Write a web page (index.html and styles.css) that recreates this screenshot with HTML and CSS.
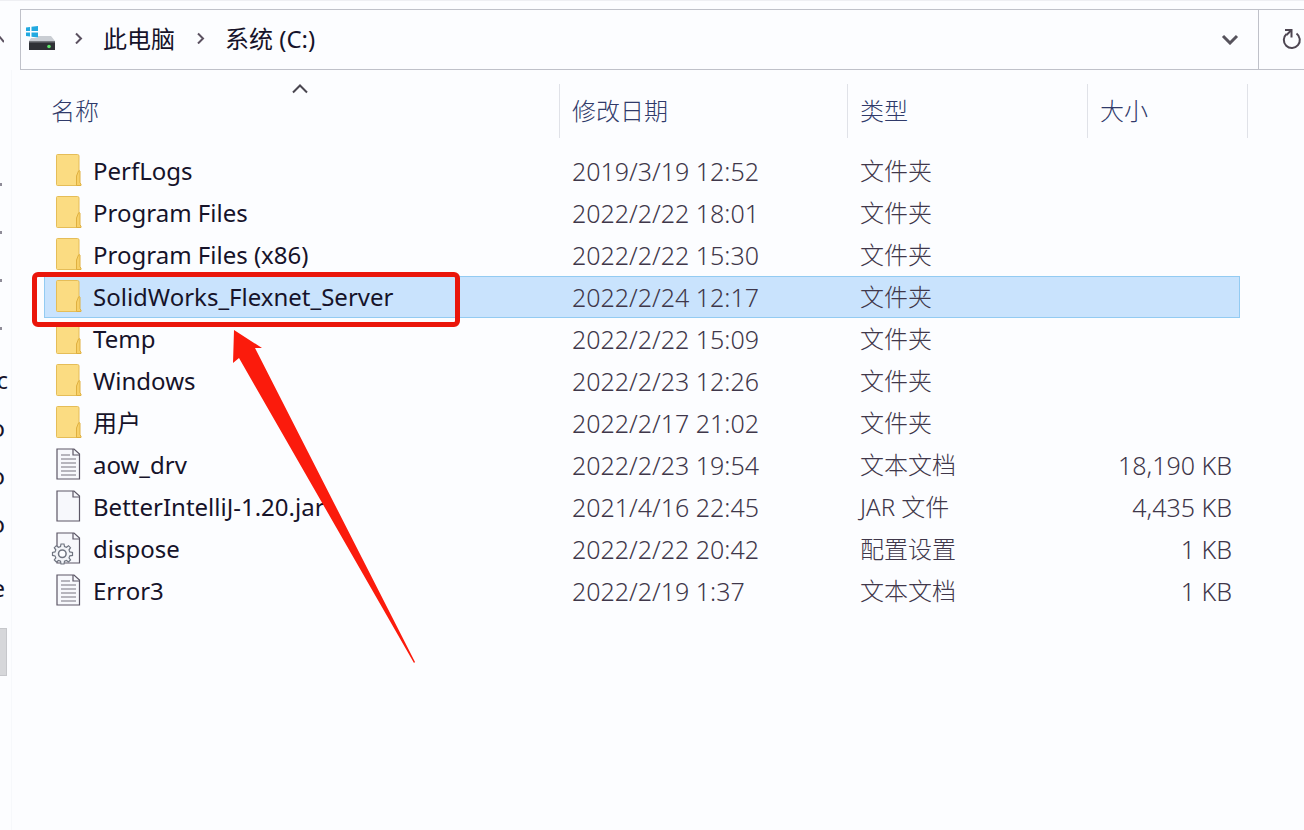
FILE: index.html
```
<!DOCTYPE html>
<html lang="zh-CN">
<head>
    <meta charset="UTF-8">
    <meta name="viewport" content="width=device-width, initial-scale=1.0">
    <title>系统 (C:)</title>
    <link rel="stylesheet" href="styles.css">
</head>
<body>
    <!-- Icons shared by the rows -->
    <svg class="sprite" aria-hidden="true">
        <symbol id="icon-folder" viewBox="0 0 28 34">
            <path d="M2.500 .5h20q1.500 0 1.500 1.500v29.500H2.500q-1 0-1-1v-29q0-1 1-1z" fill="#fbdc82" stroke="#e5bd58"/>
            <path d="M21.500 31.500V22l2-5q1-1 1.500 0v12l1 1v1.500z" fill="#f7d068" stroke="#dfb040"/>
        </symbol>
        <symbol id="icon-page" viewBox="0 0 28 34">
            <path d="M2 1h17l5.500 5v25H2z" fill="#f7f8fc" stroke="#5c5766" stroke-width="1.200"/>
            <path d="M18 1v6h6" fill="none" stroke="#5c5766" stroke-width="1.200"/>
        </symbol>
        <symbol id="icon-text" viewBox="0 0 28 34">
            <use href="#icon-page"/>
            <path d="M6 7h9M6 11h15M6 15h15M6 19h15M6 23h15M6 27h15" stroke="#77737f" stroke-width="1.200"/>
        </symbol>
        <symbol id="icon-config" viewBox="-4 0 32 34">
            <use href="#icon-page" width="28" height="34"/>
            <path d="M6 12h3l.5 2.500 2 .8 2-1.600 2 2-1.500 2.200.8 2 2.700.5v3l-2.700.5-.8 2 1.500 2.100-2 2-2-1.500-2 .8L9 32H6l-.5-2.700-2-.8-2.200 1.500-2-2 1.500-2.100-.8-2-2.500-.5v-3l2.500-.5.8-2-1.500-2.200 2-2 2.200 1.600 2-.8z" fill="#f2f4f8" stroke="#6f7480" stroke-width="1.200"/>
            <circle cx="7.300" cy="21.800" r="3.800" fill="#fcfdff" stroke="#6f7480" stroke-width="1.500"/>
        </symbol>
    </svg>

    <header class="toolbar">
        <button class="up-button" type="button" aria-label="上移">
            <svg width="10" height="10" viewBox="0 0 10 10"><path d="M0 7l5-6 5 6" /></svg>
        </button>
        <div class="address">
            <svg class="drive-icon" width="30" height="26" viewBox="0 0 30 26" aria-hidden="true">
                <path d="M0 2.500l4-.5v4H0zM5.500 1.800L12 1v5H5.500zM0 7.500h4v4l-4-.4zM5.500 7.500H12v5l-6.500-.8z" fill="#22a9e0"/>
                <path d="M12 11h13l4 5H3l2-3h7z" fill="#c9cdd3"/>
                <path d="M3 16h26v9H3z" fill="#2f3136"/>
                <path d="M3 16h26v1.500H3z" fill="#74777c"/>
                <circle cx="23" cy="21.500" r="1.800" fill="#5fe36a"/>
            </svg>
            <svg class="chevron" width="8" height="12" viewBox="0 0 8 12" aria-hidden="true"><path d="M1 1.500l5 5-5 5"/></svg>
            <a href="#">此电脑</a>
            <svg class="chevron" width="8" height="12" viewBox="0 0 8 12" aria-hidden="true"><path d="M1 1.500l5 5-5 5"/></svg>
            <a href="#">系统 (C:)</a>
            <button class="history-button" type="button" aria-label="以前的位置">
                <svg width="18" height="14" viewBox="0 0 18 14"><path d="M2 5l7 7 7-7"/></svg>
            </button>
        </div>
        <button class="refresh-button" type="button" aria-label="刷新">
            <svg width="22" height="24" viewBox="0 0 22 24"><path d="M15.500 5.500a8 8 0 1 1-10 .5"/><path d="M4 2h6.500v7.500"/><path d="M10.500 2L5.500 7"/></svg>
        </button>
    </header>

    <div class="window">
        <nav class="side">
            <span class="pin"></span>
            <span class="pin"></span>
            <span class="pin"></span>
            <span class="pin"></span>
            <a class="wide" href="#">c</a>
            <a href="#">o</a>
            <a href="#">o</a>
            <a href="#">o</a>
            <a class="last" href="#">e</a>
            <span class="current"></span>
        </nav>

        <main class="files">
            <table>
                <colgroup>
                    <col>
                    <col class="col-date">
                    <col class="col-type">
                    <col class="col-size">
                </colgroup>
                <thead>
                    <tr>
                        <th>名称
                            <svg class="sort-mark" width="16" height="10" viewBox="0 0 16 10" aria-hidden="true"><path d="M1 8.500L8 1.500l7 7"/></svg>
                        </th>
                        <th>修改日期</th>
                        <th>类型</th>
                        <th>大小</th>
                    </tr>
                </thead>
                <tbody>
                    <tr>
                        <td><a class="name" href="#"><svg class="icon"><use href="#icon-folder"/></svg>PerfLogs</a></td>
                        <td class="figure">2019/3/19 12:52</td>
                        <td>文件夹</td>
                        <td class="figure"></td>
                    </tr>
                    <tr>
                        <td><a class="name" href="#"><svg class="icon"><use href="#icon-folder"/></svg>Program Files</a></td>
                        <td class="figure">2022/2/22 18:01</td>
                        <td>文件夹</td>
                        <td class="figure"></td>
                    </tr>
                    <tr>
                        <td><a class="name" href="#"><svg class="icon"><use href="#icon-folder"/></svg>Program Files (x86)</a></td>
                        <td class="figure">2022/2/22 15:30</td>
                        <td>文件夹</td>
                        <td class="figure"></td>
                    </tr>
                    <tr class="selected">
                        <td>
                            <a class="name" href="#"><svg class="icon"><use href="#icon-folder"/></svg>SolidWorks_Flexnet_Server</a>
                            <div class="mark-box"></div>
                            <svg class="mark-arrow" width="184" height="336" viewBox="0 0 184 336" aria-hidden="true">
                                <path d="M3 1L31 19l-7 0L184 333l-1 1L8 29l-6 5z"/>
                            </svg>
                        </td>
                        <td class="figure">2022/2/24 12:17</td>
                        <td>文件夹</td>
                        <td class="figure"></td>
                    </tr>
                    <tr>
                        <td><a class="name" href="#"><svg class="icon"><use href="#icon-folder"/></svg>Temp</a></td>
                        <td class="figure">2022/2/22 15:09</td>
                        <td>文件夹</td>
                        <td class="figure"></td>
                    </tr>
                    <tr>
                        <td><a class="name" href="#"><svg class="icon"><use href="#icon-folder"/></svg>Windows</a></td>
                        <td class="figure">2022/2/23 12:26</td>
                        <td>文件夹</td>
                        <td class="figure"></td>
                    </tr>
                    <tr>
                        <td><a class="name" href="#"><svg class="icon"><use href="#icon-folder"/></svg>用户</a></td>
                        <td class="figure">2022/2/17 21:02</td>
                        <td>文件夹</td>
                        <td class="figure"></td>
                    </tr>
                    <tr>
                        <td><a class="name" href="#"><svg class="icon"><use href="#icon-text"/></svg>aow_drv</a></td>
                        <td class="figure">2022/2/23 19:54</td>
                        <td>文本文档</td>
                        <td class="figure">18,190 KB</td>
                    </tr>
                    <tr>
                        <td><a class="name" href="#"><svg class="icon"><use href="#icon-page"/></svg>BetterIntelliJ-1.20.jar</a></td>
                        <td class="figure">2021/4/16 22:45</td>
                        <td>JAR 文件</td>
                        <td class="figure">4,435 KB</td>
                    </tr>
                    <tr>
                        <td><a class="name" href="#"><svg class="icon icon-wide"><use href="#icon-config"/></svg>dispose</a></td>
                        <td class="figure">2022/2/22 20:42</td>
                        <td>配置设置</td>
                        <td class="figure">1 KB</td>
                    </tr>
                    <tr>
                        <td><a class="name" href="#"><svg class="icon"><use href="#icon-text"/></svg>Error3</a></td>
                        <td class="figure">2022/2/19 1:37</td>
                        <td>文本文档</td>
                        <td class="figure">1 KB</td>
                    </tr>
                </tbody>
            </table>
        </main>
    </div>
</body>
</html>
```
FILE: styles.css
```
* {
    box-sizing: border-box;
}

body {
    margin: 0;
    min-height: 100vh;
    display: flex;
    flex-direction: column;
    background-color: #fcfdff;
    border-top: 1px solid #eeeff3;
    font-family: "Noto Sans", "Noto Sans CJK SC", sans-serif;
    font-size: 24px;
    color: #16132a;
    overflow-x: hidden;
}

a {
    color: inherit;
    text-decoration: none;
}

button {
    padding: 0;
    border: none;
    background: none;
    cursor: pointer;
}

svg {
    display: block;
    flex-shrink: 0;
}

.sprite {
    position: absolute;
    width: 0;
    height: 0;
}

/* Address bar */
.toolbar {
    display: flex;
    height: 61px;
    margin-top: 8px;
}

.up-button {
    width: 20px;
    display: flex;
    align-items: center;
    justify-content: flex-start;
    overflow: hidden;
}

.up-button svg {
    margin-left: -6px;
    fill: none;
    stroke: #5b5160;
    stroke-width: 2;
}

.address {
    flex: 1;
    display: flex;
    align-items: center;
    padding: 0 19px 4px 5px;
    border: 1px solid #bfc1c9;
}

.drive-icon {
    margin-right: 19px;
}

.chevron {
    fill: none;
    stroke: #5b5160;
    stroke-width: 2;
}

.address a {
    margin: 0 22px 0 20px;
}

.history-button {
    margin-left: auto;
}

.history-button svg {
    fill: none;
    stroke: #56535c;
    stroke-width: 3;
}

.refresh-button {
    width: 45px;
    display: flex;
    align-items: center;
    justify-content: flex-end;
    padding-right: 1px;
    border: solid #bfc1c9;
    border-width: 1px 0;
}

.refresh-button svg {
    fill: none;
    stroke: #4e4652;
    stroke-width: 2;
}

.window {
    flex: 1;
    display: flex;
}

/* Cut-off edge of the navigation pane */
.side {
    width: 12px;
    padding-top: 90px;
    display: flex;
    flex-direction: column;
    border-right: 1px solid #f6f8fb;
    overflow: hidden;
}

.side a {
    height: 48px;
    line-height: 56px;
    padding-right: 6px;
    display: flex;
    justify-content: flex-end;
}

.side .wide {
    padding-right: 3px;
}

.side .last {
    margin-top: 16px;
}

.pin {
    height: 48px;
    display: flex;
    align-items: center;
}

.pin::before {
    content: "";
    width: 2px;
    height: 3px;
    background-color: #8f8c98;
}

.current {
    width: 7px;
    height: 48px;
    margin-top: 20px;
    background-color: #d6d7da;
    border: 1px solid #c6c7cb;
    border-left: none;
}

/* File list */
.files {
    flex: 1;
    padding: 14px 56px 0 32px;
}

table {
    width: 100%;
    table-layout: fixed;
    border-spacing: 0;
}

.col-date {
    width: 288px;
}

.col-type {
    width: 240px;
}

.col-size {
    width: 160px;
}

th {
    position: relative;
    height: 54px;
    padding: 0 0 4px 12px;
    border-right: 1px solid #e0e2e8;
    text-align: left;
    font-weight: 300;
    color: #303a6a;
}

th:first-child {
    padding-left: 7px;
}

.sort-mark {
    position: absolute;
    top: 0;
    left: 50%;
    margin-left: -10px;
    fill: none;
    stroke: #4a4650;
    stroke-width: 2;
}

tbody::before {
    content: "";
    display: block;
    height: 12px;
}

td {
    height: 42px;
    padding: 0 0 0 12px;
    line-height: 36px;
    font-weight: 300;
    color: #3f374a;
    white-space: nowrap;
}

td:first-child {
    position: relative;
    padding-left: 11px;
}

td:last-child {
    padding-right: 8px;
    border-right: 8px solid transparent;
    background-clip: padding-box;
    text-align: right;
}

.figure {
    font-size: 25px;
}

.name {
    display: flex;
    align-items: center;
    font-weight: 400;
    color: #16132a;
}

.icon {
    width: 28px;
    height: 34px;
    margin-right: 10px;
}

.icon-wide {
    width: 32px;
    margin-left: -4px;
}

.selected td {
    background-color: #c9e3fd;
    box-shadow: inset 0 1px #93cbf2, inset 0 -1px #93cbf2;
}

.selected td:first-child {
    box-shadow: inset 1px 1px #93cbf2, inset 0 -1px #93cbf2;
}

.selected td:last-child {
    box-shadow: inset -1px 1px #93cbf2, inset 0 -1px #93cbf2;
}

/* Red box and arrow over the list */
.mark-box {
    position: absolute;
    top: -4px;
    left: -12px;
    width: 428px;
    height: 55px;
    border: 5px solid #ea160b;
    border-radius: 6px;
    pointer-events: none;
    z-index: 1;
}

.mark-arrow {
    position: absolute;
    top: 53px;
    left: 187px;
    fill: #fb1b0c;
    pointer-events: none;
    z-index: 1;
}
```
